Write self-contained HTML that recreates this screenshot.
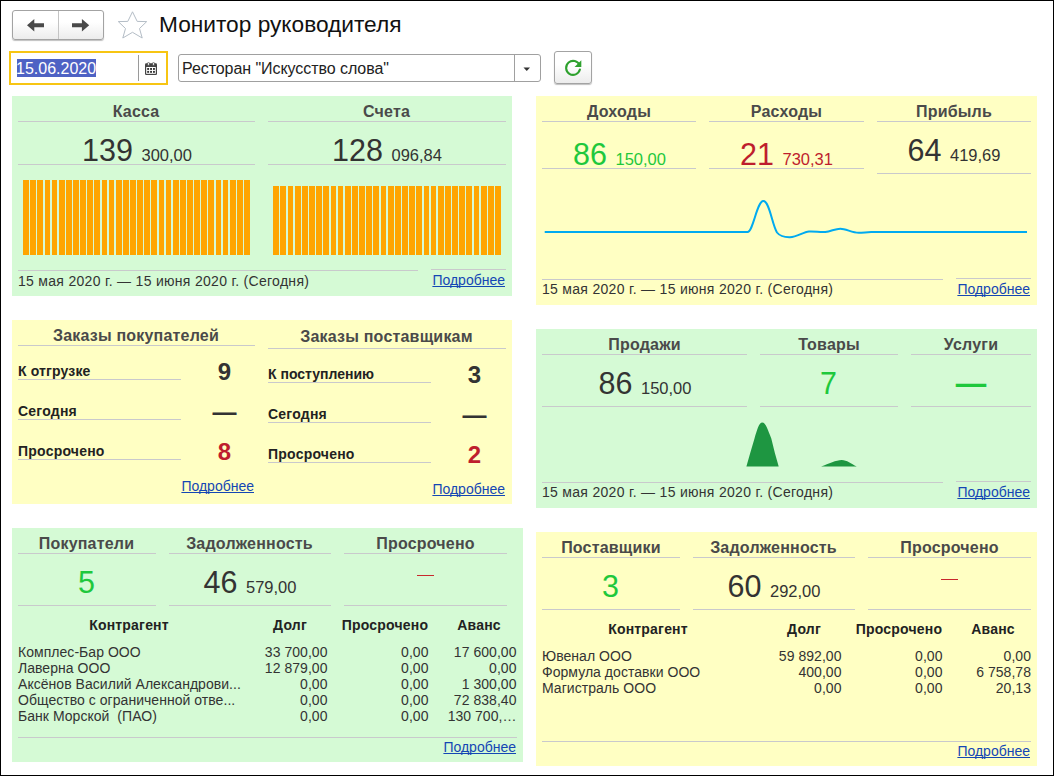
<!DOCTYPE html>
<html lang="ru"><head><meta charset="utf-8"><title>Монитор руководителя</title>
<style>
html,body{margin:0;padding:0;background:#fff}
body{width:1054px;height:776px;position:relative;overflow:hidden;font-family:"Liberation Sans",Arial,sans-serif;color:#333333}
#frame{position:absolute;left:0;top:0;width:1052px;height:774px;border:1px solid #000;pointer-events:none;z-index:9}
.abs{position:absolute}
.p{position:absolute}
.hl{position:absolute;height:1px}
.t{position:absolute;white-space:pre}
.b{font-weight:bold}
.a{color:#1446B4;text-decoration:underline;text-decoration-skip-ink:none;text-underline-offset:1px}
.d{letter-spacing:0.3px}
.r{letter-spacing:0.04px}
.h{letter-spacing:0.2px}
.btn{position:absolute;box-sizing:border-box;border:1px solid #A3A3A3;border-radius:3px;background:linear-gradient(#fff 40%,#ececec);box-shadow:0 1px 1px rgba(0,0,0,.25)}
</style></head><body>
<div id="frame"></div>
<!-- header -->
<div class="btn" style="left:12px;top:10px;width:92px;height:30px"></div>
<div class="abs" style="left:58px;top:11px;width:1px;height:28px;background:#C4C4C4"></div>
<svg class="abs" style="left:0;top:0" width="200" height="50">
<g fill="#4A4A4A"><path d="M27,25.3 L34.3,19 L34.3,23.3 L44,23.3 L44,27.3 L34.3,27.3 L34.3,31.6 Z"/><path d="M89.2,25.3 L81.9,19 L81.9,23.3 L72,23.3 L72,27.3 L81.9,27.3 L81.9,31.6 Z"/></g>
<path fill="#fff" stroke="#B4BDC6" stroke-width="1" stroke-linejoin="miter" d="M132.5,11.8 L137.2,21.4 L146.7,21.6 L139.5,28.5 L142.2,38 L132.5,32.3 L122.8,38 L125.5,28.5 L118.3,21.6 L127.8,21.4 Z"/>
</svg>
<div class="t" style="left:159px;top:9px;font-size:22.7px;line-height:30px;color:#111">Монитор руководителя</div>
<!-- date field -->
<div class="abs" style="left:9px;top:51px;width:155px;height:30px;border:2px solid #F7C513;background:#fff"></div>
<div class="abs" style="left:16.5px;top:59px;width:79.5px;height:18px;background:#4E62C4"></div>
<div class="t" style="left:16px;top:58px;font-size:16px;line-height:22px;color:#fff">15.06.2020</div>
<div class="abs" style="left:138px;top:55px;width:1px;height:26px;background:#9A9A9A"></div>
<svg class="abs" style="left:145px;top:62px" width="12" height="13" viewBox="0 0 12 13">
<rect x="0" y="1.2" width="12" height="11.8" rx="1.3" fill="#444"/>
<rect x="1.2" y="5" width="9.6" height="6.8" fill="#fff"/>
<g fill="#333"><rect x="2.2" y="6" width="1.9" height="1.9"/><rect x="5.1" y="6" width="1.9" height="1.9"/><rect x="8" y="6" width="1.9" height="1.9"/><rect x="2.2" y="8.9" width="1.9" height="1.9"/><rect x="5.1" y="8.9" width="1.9" height="1.9"/><rect x="8" y="8.9" width="1.9" height="1.9"/></g>
<g fill="#fff" stroke="#444" stroke-width="0.7"><ellipse cx="3.5" cy="1.9" rx="1" ry="1.6"/><ellipse cx="8.5" cy="1.9" rx="1" ry="1.6"/></g>
</svg>
<!-- select -->
<div class="abs" style="left:178px;top:54px;width:361px;height:26px;border:1px solid #A0A0A0;border-radius:3px;background:#fff"></div>
<div class="abs" style="left:514px;top:55px;width:1px;height:26px;background:#A0A0A0"></div>
<div class="t" style="left:182px;top:58px;font-size:16px;line-height:22px;color:#222;letter-spacing:-0.06px">Ресторан "Искусство слова"</div>
<svg class="abs" style="left:523px;top:67px" width="8" height="5"><path d="M0.5,0.5 L7,0.5 L3.75,4 Z" fill="#333"/></svg>
<!-- refresh -->
<div class="btn" style="left:554px;top:51px;width:38px;height:33px"></div>
<svg class="abs" style="left:562px;top:57px" width="24" height="22" viewBox="0 0 24 22">
<path d="M17.6,8.2 A7,7 0 1 0 17.9,12.6" fill="none" stroke="#2EA12E" stroke-width="2.1" stroke-linecap="round"/>
<path d="M19.3,3.2 L19.3,10 L12.6,10 Z" fill="#2EA12E"/>
</svg>
<div class="p" style="left:12px;top:96px;width:500px;height:200px;background:#D5FAD5"></div>
<div class="p" style="left:536px;top:96px;width:501px;height:209px;background:#FFFFC3"></div>
<div class="p" style="left:12px;top:320px;width:500px;height:184px;background:#FFFFC3"></div>
<div class="p" style="left:536px;top:329px;width:501px;height:179px;background:#D5FAD5"></div>
<div class="p" style="left:12px;top:528px;width:511px;height:234px;background:#D5FAD5"></div>
<div class="p" style="left:536px;top:532px;width:501px;height:234px;background:#FFFFC3"></div>
<div class="t b h" style="top:102px;font-size:16px;line-height:19px;color:#4A4A4A;left:-164px;width:600px;text-align:center;">Касса</div>
<div class="t b h" style="top:102px;font-size:16px;line-height:19px;color:#4A4A4A;left:86.5px;width:600px;text-align:center;">Счета</div>
<div class="hl" style="left:18px;top:121px;width:237px;background:#C9C9CC"></div>
<div class="hl" style="left:268px;top:121px;width:238px;background:#C9C9CC"></div>
<div class="t " style="top:132px;font-size:30.5px;line-height:37px;color:#333333;left:-163px;width:600px;text-align:center;"><span style="font-size:30.5px">139 </span><span style="font-size:16.5px">300,00</span></div>
<div class="t " style="top:132px;font-size:30.5px;line-height:37px;color:#333333;left:87px;width:600px;text-align:center;"><span style="font-size:30.5px">128 </span><span style="font-size:16.5px">096,84</span></div>
<div class="hl" style="left:18px;top:164px;width:237px;background:#C9C9CC"></div>
<div class="hl" style="left:268px;top:164px;width:238px;background:#C9C9CC"></div>
<svg class="abs" style="left:0;top:0" width="1054" height="776" shape-rendering="crispEdges"><g fill="#FFA500"><rect x="23" y="180" width="6" height="75"/><rect x="30" y="180" width="6" height="75"/><rect x="37" y="180" width="6" height="75"/><rect x="45" y="180" width="5" height="75"/><rect x="52" y="180" width="5" height="75"/><rect x="59" y="180" width="6" height="75"/><rect x="66" y="180" width="6" height="75"/><rect x="73" y="180" width="6" height="75"/><rect x="80" y="180" width="6" height="75"/><rect x="87" y="180" width="6" height="75"/><rect x="94" y="180" width="6" height="75"/><rect x="102" y="180" width="5" height="75"/><rect x="109" y="180" width="5" height="75"/><rect x="116" y="180" width="6" height="75"/><rect x="123" y="180" width="6" height="75"/><rect x="130" y="180" width="6" height="75"/><rect x="137" y="180" width="6" height="75"/><rect x="144" y="180" width="6" height="75"/><rect x="151" y="180" width="6" height="75"/><rect x="159" y="180" width="5" height="75"/><rect x="166" y="180" width="5" height="75"/><rect x="173" y="180" width="6" height="75"/><rect x="180" y="180" width="6" height="75"/><rect x="187" y="180" width="6" height="75"/><rect x="194" y="180" width="6" height="75"/><rect x="201" y="180" width="6" height="75"/><rect x="208" y="180" width="6" height="75"/><rect x="216" y="180" width="5" height="75"/><rect x="223" y="180" width="5" height="75"/><rect x="230" y="180" width="6" height="75"/><rect x="237" y="180" width="6" height="75"/><rect x="244" y="180" width="6" height="75"/></g></svg>
<svg class="abs" style="left:0;top:0" width="1054" height="776" shape-rendering="crispEdges"><g fill="#FFA500"><rect x="273" y="186" width="6" height="69"/><rect x="280" y="186" width="6" height="69"/><rect x="288" y="186" width="5" height="69"/><rect x="295" y="186" width="6" height="69"/><rect x="302" y="186" width="6" height="69"/><rect x="309" y="186" width="6" height="69"/><rect x="316" y="186" width="6" height="69"/><rect x="323" y="186" width="6" height="69"/><rect x="331" y="186" width="5" height="69"/><rect x="338" y="186" width="5" height="69"/><rect x="345" y="186" width="6" height="69"/><rect x="352" y="186" width="6" height="69"/><rect x="359" y="186" width="6" height="69"/><rect x="366" y="186" width="6" height="69"/><rect x="373" y="186" width="6" height="69"/><rect x="381" y="186" width="5" height="69"/><rect x="388" y="186" width="6" height="69"/><rect x="395" y="186" width="6" height="69"/><rect x="402" y="186" width="6" height="69"/><rect x="409" y="186" width="6" height="69"/><rect x="416" y="186" width="6" height="69"/><rect x="424" y="186" width="5" height="69"/><rect x="431" y="186" width="5" height="69"/><rect x="438" y="186" width="6" height="69"/><rect x="445" y="186" width="6" height="69"/><rect x="452" y="186" width="6" height="69"/><rect x="459" y="186" width="6" height="69"/><rect x="466" y="186" width="6" height="69"/><rect x="474" y="186" width="5" height="69"/><rect x="481" y="186" width="6" height="69"/><rect x="488" y="186" width="6" height="69"/><rect x="495" y="186" width="6" height="69"/></g></svg>
<div class="hl" style="left:18px;top:270px;width:400px;background:#C9C9CC"></div>
<div class="hl" style="left:431px;top:269px;width:75px;background:#C9C9CC"></div>
<div class="t d" style="top:273px;font-size:14px;line-height:17px;left:18px;">15 мая 2020 г. — 15 июня 2020 г. (Сегодня)</div>
<div class="t a" style="top:272px;font-size:14px;line-height:17px;right:549px;">Подробнее</div>
<div class="t b h" style="top:102px;font-size:16px;line-height:19px;color:#4A4A4A;left:319px;width:600px;text-align:center;">Доходы</div>
<div class="t b h" style="top:102px;font-size:16px;line-height:19px;color:#4A4A4A;left:486.5px;width:600px;text-align:center;">Расходы</div>
<div class="t b h" style="top:102px;font-size:16px;line-height:19px;color:#4A4A4A;left:654px;width:600px;text-align:center;">Прибыль</div>
<div class="hl" style="left:542px;top:121px;width:154px;background:#C9C9CC"></div>
<div class="hl" style="left:709px;top:121px;width:155px;background:#C9C9CC"></div>
<div class="hl" style="left:877px;top:121px;width:154px;background:#C9C9CC"></div>
<div class="t " style="top:136px;font-size:30.5px;line-height:37px;color:#1EC83C;left:319.5px;width:600px;text-align:center;"><span style="font-size:30.5px">86 </span><span style="font-size:16.5px">150,00</span></div>
<div class="t " style="top:136px;font-size:30.5px;line-height:37px;color:#BE1E2D;left:486.5px;width:600px;text-align:center;"><span style="font-size:30.5px">21 </span><span style="font-size:16.5px">730,31</span></div>
<div class="t " style="top:132px;font-size:30.5px;line-height:37px;color:#333333;left:654px;width:600px;text-align:center;"><span style="font-size:30.5px">64 </span><span style="font-size:16.5px">419,69</span></div>
<div class="hl" style="left:542px;top:168px;width:154px;background:#C9C9CC"></div>
<div class="hl" style="left:709px;top:168px;width:155px;background:#C9C9CC"></div>
<div class="hl" style="left:877px;top:173px;width:154px;background:#C9C9CC"></div>
<svg class="abs" style="left:0;top:0" width="1054" height="776"><path transform="translate(0,0.5)" fill="none" stroke="#00AAF0" stroke-width="2" stroke-linejoin="round" d="M544.7,231.5 L747.6,231.5 C753,231.5 757,200.6 763.3,200.6 C769.5,200.6 772,224 777,232 C781,237 786,236.7 790,236.7 C797,236.7 803,231.5 809,231 C815,230.6 820,232 825.3,231.5 C831,231 835,228.2 840.3,228.2 C846,228.2 852,232.3 858.7,232.3 C863,232.3 867,231.5 871.2,231.5 L1027,231.5"/></svg>
<div class="hl" style="left:542px;top:279px;width:401px;background:#C9C9CC"></div>
<div class="hl" style="left:956px;top:278px;width:75px;background:#C9C9CC"></div>
<div class="t d" style="top:281px;font-size:14px;line-height:17px;left:542px;">15 мая 2020 г. — 15 июня 2020 г. (Сегодня)</div>
<div class="t a" style="top:281px;font-size:14px;line-height:17px;right:24px;">Подробнее</div>
<div class="t b h" style="top:326px;font-size:16px;line-height:19px;color:#4A4A4A;left:-164px;width:600px;text-align:center;">Заказы покупателей</div>
<div class="t b h" style="top:327px;font-size:16px;line-height:19px;color:#4A4A4A;left:86.5px;width:600px;text-align:center;">Заказы поставщикам</div>
<div class="hl" style="left:18px;top:345px;width:237px;background:#C9C9CC"></div>
<div class="hl" style="left:268px;top:348px;width:238px;background:#C9C9CC"></div>
<div class="t b" style="top:363px;font-size:14px;line-height:17px;color:#222;left:18px;letter-spacing:0.15px;">К отгрузке</div>
<div class="hl" style="left:18px;top:379px;width:163px;background:#C9C9CC"></div>
<div class="t b" style="top:357px;font-size:24px;line-height:29px;color:#333333;left:-75.5px;width:600px;text-align:center;">9</div>
<div class="t b" style="top:403px;font-size:14px;line-height:17px;color:#222;left:18px;letter-spacing:0.22px;">Сегодня</div>
<div class="hl" style="left:18px;top:419px;width:163px;background:#C9C9CC"></div>
<div class="t b" style="top:397px;font-size:24px;line-height:29px;color:#333333;left:-75.5px;width:600px;text-align:center;">—</div>
<div class="t b" style="top:443px;font-size:14px;line-height:17px;color:#222;left:18px;letter-spacing:0.22px;">Просрочено</div>
<div class="hl" style="left:18px;top:459px;width:163px;background:#C9C9CC"></div>
<div class="t b" style="top:437px;font-size:24px;line-height:29px;color:#BE1E2D;left:-75.5px;width:600px;text-align:center;">8</div>
<div class="t b" style="top:366px;font-size:14px;line-height:17px;color:#222;left:268px;letter-spacing:0px;">К поступлению</div>
<div class="hl" style="left:268px;top:382px;width:163px;background:#C9C9CC"></div>
<div class="t b" style="top:360px;font-size:24px;line-height:29px;color:#333333;left:174.5px;width:600px;text-align:center;">3</div>
<div class="t b" style="top:406px;font-size:14px;line-height:17px;color:#222;left:268px;letter-spacing:0.22px;">Сегодня</div>
<div class="hl" style="left:268px;top:422px;width:163px;background:#C9C9CC"></div>
<div class="t b" style="top:400px;font-size:24px;line-height:29px;color:#333333;left:174.5px;width:600px;text-align:center;">—</div>
<div class="t b" style="top:446px;font-size:14px;line-height:17px;color:#222;left:268px;letter-spacing:0.22px;">Просрочено</div>
<div class="hl" style="left:268px;top:462px;width:163px;background:#C9C9CC"></div>
<div class="t b" style="top:440px;font-size:24px;line-height:29px;color:#BE1E2D;left:174.5px;width:600px;text-align:center;">2</div>
<div class="t a" style="top:478px;font-size:14px;line-height:17px;right:800px;">Подробнее</div>
<div class="t a" style="top:481px;font-size:14px;line-height:17px;right:549px;">Подробнее</div>
<div class="t b h" style="top:335px;font-size:16px;line-height:19px;color:#4A4A4A;left:344.5px;width:600px;text-align:center;">Продажи</div>
<div class="t b h" style="top:335px;font-size:16px;line-height:19px;color:#4A4A4A;left:529px;width:600px;text-align:center;">Товары</div>
<div class="t b h" style="top:335px;font-size:16px;line-height:19px;color:#4A4A4A;left:671px;width:600px;text-align:center;">Услуги</div>
<div class="hl" style="left:542px;top:354px;width:205px;background:#C9C9CC"></div>
<div class="hl" style="left:760px;top:354px;width:138px;background:#C9C9CC"></div>
<div class="hl" style="left:911px;top:354px;width:120px;background:#C9C9CC"></div>
<div class="t " style="top:365px;font-size:30.5px;line-height:37px;color:#333333;left:345px;width:600px;text-align:center;"><span style="font-size:30.5px">86 </span><span style="font-size:16.5px">150,00</span></div>
<div class="t " style="top:365px;font-size:30.5px;line-height:37px;color:#1EC83C;left:528.5px;width:600px;text-align:center;"><span style="font-size:30.5px">7</span></div>
<div class="t " style="top:365px;font-size:30.5px;line-height:37px;color:#1EC83C;left:671px;width:600px;text-align:center;"><span style="font-size:30.5px"><b>—</b></span></div>
<div class="hl" style="left:542px;top:406px;width:205px;background:#C9C9CC"></div>
<div class="hl" style="left:760px;top:406px;width:138px;background:#C9C9CC"></div>
<div class="hl" style="left:911px;top:406px;width:120px;background:#C9C9CC"></div>
<svg class="abs" style="left:0;top:0" width="1054" height="776"><g fill="#1E9641"><path d="M746.4,466.5 L750.3,452.7 L754.5,438.5 C757,430 759,422.5 762.3,422.5 C765.6,422.5 768,430 771.3,438.5 L774.8,452.7 L778.7,466.5 Z"/><path d="M821.1,466.5 C829,464 836,460.1 841.7,460.1 C847,460.1 851,464 856.7,466.5 Z"/></g></svg>
<div class="hl" style="left:542px;top:482px;width:401px;background:#C9C9CC"></div>
<div class="hl" style="left:956px;top:481px;width:75px;background:#C9C9CC"></div>
<div class="t d" style="top:484px;font-size:14px;line-height:17px;left:542px;">15 мая 2020 г. — 15 июня 2020 г. (Сегодня)</div>
<div class="t a" style="top:484px;font-size:14px;line-height:17px;right:24px;">Подробнее</div>
<div class="t b h" style="top:534px;font-size:16px;line-height:19px;color:#4A4A4A;left:-213.5px;width:600px;text-align:center;">Покупатели</div>
<div class="t b h" style="top:534px;font-size:16px;line-height:19px;color:#4A4A4A;left:-50.5px;width:600px;text-align:center;">Задолженность</div>
<div class="t b h" style="top:534px;font-size:16px;line-height:19px;color:#4A4A4A;left:125.5px;width:600px;text-align:center;">Просрочено</div>
<div class="hl" style="left:18px;top:553px;width:138px;background:#C9C9CC"></div>
<div class="hl" style="left:169px;top:553px;width:162px;background:#C9C9CC"></div>
<div class="hl" style="left:344px;top:553px;width:163px;background:#C9C9CC"></div>
<div class="t " style="top:564px;font-size:30.5px;line-height:37px;color:#1EC83C;left:-213.5px;width:600px;text-align:center;"><span style="font-size:30.5px">5</span></div>
<div class="t " style="top:564px;font-size:30.5px;line-height:37px;color:#333333;left:-50px;width:600px;text-align:center;"><span style="font-size:30.5px">46 </span><span style="font-size:16.5px">579,00</span></div>
<div class="hl" style="left:417px;top:575px;width:17px;background:#C8282D"></div>
<div class="hl" style="left:18px;top:605px;width:138px;background:#C9C9CC"></div>
<div class="hl" style="left:169px;top:605px;width:162px;background:#C9C9CC"></div>
<div class="hl" style="left:344px;top:605px;width:163px;background:#C9C9CC"></div>
<div class="t b h" style="top:617px;font-size:14px;line-height:17px;color:#222;left:-171px;width:600px;text-align:center;">Контрагент</div>
<div class="t b h" style="top:617px;font-size:14px;line-height:17px;color:#222;left:-10px;width:600px;text-align:center;">Долг</div>
<div class="t b h" style="top:617px;font-size:14px;line-height:17px;color:#222;left:85px;width:600px;text-align:center;">Просрочено</div>
<div class="t b h" style="top:617px;font-size:14px;line-height:17px;color:#222;left:179px;width:600px;text-align:center;">Аванс</div>
<div class="t r" style="top:644px;font-size:14px;line-height:17px;left:18px;">Комплес-Бар ООО</div>
<div class="t r" style="top:644px;font-size:14px;line-height:17px;right:726.5px;">33 700,00</div>
<div class="t r" style="top:644px;font-size:14px;line-height:17px;right:625.5px;">0,00</div>
<div class="t r" style="top:644px;font-size:14px;line-height:17px;right:537.5px;">17 600,00</div>
<div class="t r" style="top:660px;font-size:14px;line-height:17px;left:18px;">Лаверна ООО</div>
<div class="t r" style="top:660px;font-size:14px;line-height:17px;right:726.5px;">12 879,00</div>
<div class="t r" style="top:660px;font-size:14px;line-height:17px;right:625.5px;">0,00</div>
<div class="t r" style="top:660px;font-size:14px;line-height:17px;right:537.5px;">0,00</div>
<div class="t r" style="top:676px;font-size:14px;line-height:17px;left:18px;">Аксёнов Василий Александрови...</div>
<div class="t r" style="top:676px;font-size:14px;line-height:17px;right:726.5px;">0,00</div>
<div class="t r" style="top:676px;font-size:14px;line-height:17px;right:625.5px;">0,00</div>
<div class="t r" style="top:676px;font-size:14px;line-height:17px;right:537.5px;">1 300,00</div>
<div class="t r" style="top:692px;font-size:14px;line-height:17px;left:18px;">Общество с ограниченной отве...</div>
<div class="t r" style="top:692px;font-size:14px;line-height:17px;right:726.5px;">0,00</div>
<div class="t r" style="top:692px;font-size:14px;line-height:17px;right:625.5px;">0,00</div>
<div class="t r" style="top:692px;font-size:14px;line-height:17px;right:537.5px;">72 838,40</div>
<div class="t r" style="top:708px;font-size:14px;line-height:17px;left:18px;">Банк Морской&nbsp; (ПАО)</div>
<div class="t r" style="top:708px;font-size:14px;line-height:17px;right:726.5px;">0,00</div>
<div class="t r" style="top:708px;font-size:14px;line-height:17px;right:625.5px;">0,00</div>
<div class="t r" style="top:708px;font-size:14px;line-height:17px;right:537.5px;">130 700,…</div>
<div class="hl" style="left:18px;top:737px;width:499px;background:#C9C9CC"></div>
<div class="t a" style="top:739px;font-size:14px;line-height:17px;right:538px;">Подробнее</div>
<div class="t b h" style="top:538px;font-size:16px;line-height:19px;color:#4A4A4A;left:311px;width:600px;text-align:center;">Поставщики</div>
<div class="t b h" style="top:538px;font-size:16px;line-height:19px;color:#4A4A4A;left:473.5px;width:600px;text-align:center;">Задолженность</div>
<div class="t b h" style="top:538px;font-size:16px;line-height:19px;color:#4A4A4A;left:649.5px;width:600px;text-align:center;">Просрочено</div>
<div class="hl" style="left:542px;top:557px;width:138px;background:#C9C9CC"></div>
<div class="hl" style="left:693px;top:557px;width:162px;background:#C9C9CC"></div>
<div class="hl" style="left:868px;top:557px;width:163px;background:#C9C9CC"></div>
<div class="t " style="top:568px;font-size:30.5px;line-height:37px;color:#1EC83C;left:310.5px;width:600px;text-align:center;"><span style="font-size:30.5px">3</span></div>
<div class="t " style="top:568px;font-size:30.5px;line-height:37px;color:#333333;left:474px;width:600px;text-align:center;"><span style="font-size:30.5px">60 </span><span style="font-size:16.5px">292,00</span></div>
<div class="hl" style="left:941px;top:579px;width:17px;background:#C8282D"></div>
<div class="hl" style="left:542px;top:609px;width:138px;background:#C9C9CC"></div>
<div class="hl" style="left:693px;top:609px;width:162px;background:#C9C9CC"></div>
<div class="hl" style="left:868px;top:609px;width:163px;background:#C9C9CC"></div>
<div class="t b h" style="top:621px;font-size:14px;line-height:17px;color:#222;left:348px;width:600px;text-align:center;">Контрагент</div>
<div class="t b h" style="top:621px;font-size:14px;line-height:17px;color:#222;left:504px;width:600px;text-align:center;">Долг</div>
<div class="t b h" style="top:621px;font-size:14px;line-height:17px;color:#222;left:599px;width:600px;text-align:center;">Просрочено</div>
<div class="t b h" style="top:621px;font-size:14px;line-height:17px;color:#222;left:693px;width:600px;text-align:center;">Аванс</div>
<div class="t r" style="top:648px;font-size:14px;line-height:17px;left:542px;">Ювенал ООО</div>
<div class="t r" style="top:648px;font-size:14px;line-height:17px;right:212.5px;">59 892,00</div>
<div class="t r" style="top:648px;font-size:14px;line-height:17px;right:111.5px;">0,00</div>
<div class="t r" style="top:648px;font-size:14px;line-height:17px;right:23px;">0,00</div>
<div class="t r" style="top:664px;font-size:14px;line-height:17px;left:542px;">Формула доставки ООО</div>
<div class="t r" style="top:664px;font-size:14px;line-height:17px;right:212.5px;">400,00</div>
<div class="t r" style="top:664px;font-size:14px;line-height:17px;right:111.5px;">0,00</div>
<div class="t r" style="top:664px;font-size:14px;line-height:17px;right:23px;">6 758,78</div>
<div class="t r" style="top:680px;font-size:14px;line-height:17px;left:542px;">Магистраль ООО</div>
<div class="t r" style="top:680px;font-size:14px;line-height:17px;right:212.5px;">0,00</div>
<div class="t r" style="top:680px;font-size:14px;line-height:17px;right:111.5px;">0,00</div>
<div class="t r" style="top:680px;font-size:14px;line-height:17px;right:23px;">20,13</div>
<div class="hl" style="left:542px;top:741px;width:489px;background:#C9C9CC"></div>
<div class="t a" style="top:743px;font-size:14px;line-height:17px;right:24px;">Подробнее</div>
</body></html>
